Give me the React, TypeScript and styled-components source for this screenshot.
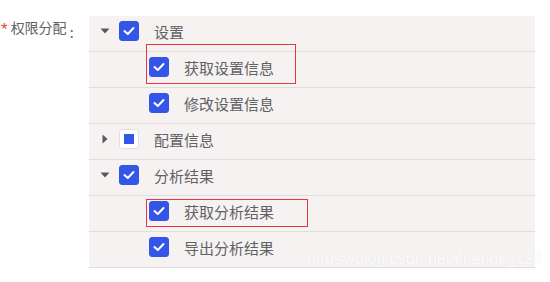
import React from "react";
import styled, { createGlobalStyle } from "styled-components";

const Global = createGlobalStyle`
  html, body { margin: 0; padding: 0; background: #ffffff; }
  body { font-family: "Noto Sans CJK SC", "Noto Sans", sans-serif; }
`;

const Page = styled.div`
  position: relative;
  width: 550px;
  height: 282px;
  display: flex;
  align-items: flex-start;
  padding-top: 16px;
  box-sizing: border-box;
`;

const Label = styled.div`
  width: 89px;
  flex: none;
  box-sizing: border-box;
  padding-left: 1px;
  margin-top: 0px;
  font-size: 14px;
  color: #606266;
  line-height: 22px;
  white-space: nowrap;
`;

const Star = styled.span`
  color: #f23c3c;
  font-family: "Liberation Sans", Arial, sans-serif;
  font-size: 17px;
  margin-right: 3px;
  vertical-align: -2px;
`;

const Colon = styled.span`
  display: inline-block;
  margin-left: 3px;
  vertical-align: -5px;
`;

const Panel = styled.div`
  width: 446px;
  background: #f5f2f1;
  display: flex;
  flex-direction: column;
`;

const Row = styled.div<{ $level: number }>`
  height: 30px;
  padding-bottom: 5px;
  border-bottom: 1px solid #e3dcdc;
  display: flex;
  align-items: center;
  padding-left: ${(p) => 11 + p.$level * 30}px;
`;

const ArrowSlot = styled.span`
  width: 10px;
  height: 10px;
  flex: none;
  display: flex;
  align-items: center;
  justify-content: center;
  margin-right: 9px;
`;

const Box = styled.span<{ $state: "checked" | "half" }>`
  width: 20px;
  height: 20px;
  flex: none;
  box-sizing: border-box;
  border-radius: 3px;
  display: flex;
  align-items: center;
  justify-content: center;
  background: ${(p) => (p.$state === "checked" ? "#3355e8" : "#ffffff")};
  border: 1px solid ${(p) => (p.$state === "checked" ? "#3355e8" : "#dcdfe6")};
`;

const HalfMark = styled.span`
  width: 10px;
  height: 10px;
  background: #3355e8;
`;

const Text = styled.span`
  margin-left: 15px;
  font-size: 15px;
  color: #606266;
  letter-spacing: 0;
  white-space: nowrap;
`;

const Mark = styled.div<{ $x: number; $y: number; $w: number; $h: number }>`
  position: absolute;
  left: ${(p) => p.$x}px;
  top: ${(p) => p.$y}px;
  width: ${(p) => p.$w}px;
  height: ${(p) => p.$h}px;
  box-sizing: border-box;
  border: 1px solid #e8383d;
  pointer-events: none;
`;

const Watermark = styled.div`
  position: absolute;
  left: 307px;
  top: 249px;
  font-family: "Liberation Sans", Arial, sans-serif;
  font-size: 16px;
  line-height: 20px;
  color: rgba(255, 255, 255, 0.9);
  text-shadow: 0 0 1px rgba(150, 150, 150, 0.2);
  white-space: nowrap;
`;

const Check = () => (
  <svg width="12" height="10" viewBox="0 0 12 10">
    <polyline points="1.5,5 4.8,8 10.5,2" fill="none" stroke="#fff" strokeWidth="2" strokeLinecap="round" strokeLinejoin="round" />
  </svg>
);

const CaretDown = () => (
  <svg width="10" height="6" viewBox="0 0 10 6">
    <polygon points="0.5,0.5 9.5,0.5 5,5.5" fill="#555a60" />
  </svg>
);

const CaretRight = () => (
  <svg width="6" height="10" viewBox="0 0 6 10">
    <polygon points="0.5,0.5 5.5,5 0.5,9.5" fill="#555a60" />
  </svg>
);

type Node = { label: string; level: number; state: "checked" | "half"; arrow?: "down" | "right" };

const nodes: Node[] = [
  { label: "设置", level: 0, state: "checked", arrow: "down" },
  { label: "获取设置信息", level: 1, state: "checked" },
  { label: "修改设置信息", level: 1, state: "checked" },
  { label: "配置信息", level: 0, state: "half", arrow: "right" },
  { label: "分析结果", level: 0, state: "checked", arrow: "down" },
  { label: "获取分析结果", level: 1, state: "checked" },
  { label: "导出分析结果", level: 1, state: "checked" },
];

export default function App() {
  return (
    <>
      <Global />
      <Page>
        <Label>
          <Star>*</Star>权限分配<Colon>:</Colon>
        </Label>
        <Panel>
          {nodes.map((n, i) => (
            <Row key={i} $level={n.level}>
              <ArrowSlot>
                {n.arrow === "down" && <CaretDown />}
                {n.arrow === "right" && <CaretRight />}
              </ArrowSlot>
              <Box $state={n.state}>{n.state === "checked" ? <Check /> : <HalfMark />}</Box>
              <Text>{n.label}</Text>
            </Row>
          ))}
        </Panel>
        <Mark $x={146} $y={44} $w={150} $h={40} />
        <Mark $x={146} $y={199} $w={162} $h={28} />
        <Watermark>https://blog.csdn.net/chenqk_123</Watermark>
      </Page>
    </>
  );
}
